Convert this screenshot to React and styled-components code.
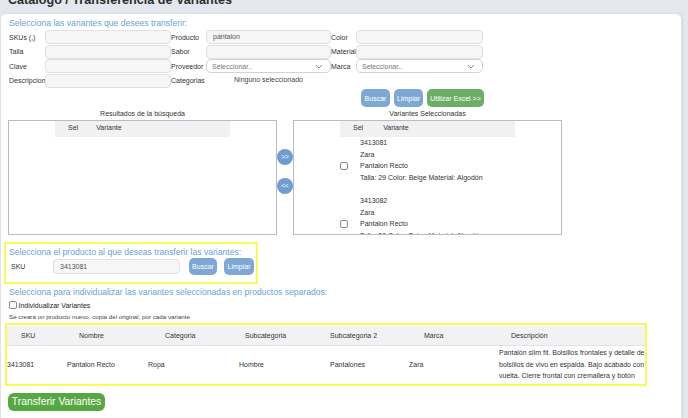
import React from 'react'
import styled, { createGlobalStyle } from 'styled-components'

const GlobalStyle = createGlobalStyle`
    html, body {
        margin: 0;
        padding: 0;
        overflow: hidden;
    }
    body {
        background: #e4e7ee;
        font-family: "Liberation Sans", Arial, sans-serif;
        color: #333;
    }
`

const Page = styled.div`
    padding: 0 6px 0 0;
    height: 418px;
    overflow: hidden;
`

const Title = styled.h1`
    margin: -7px 0 5px 8px;
    font-size: 12.6px;
    line-height: 15px;
    font-weight: bold;
    color: #2e2e2e;
    white-space: nowrap;
`

const Card = styled.div`
    background: #fff;
    border: 1px solid #e0e3e9;
    border-radius: 6px;
    box-shadow: 1px 0 2px rgba(0, 0, 0, 0.07);
    padding: 3.5px 0 20px 3px;
    height: 420px;
`

const Heading = styled.div`
    margin-left: ${p => p.$ml ?? 5}px;
    margin-top: ${p => p.$mt ?? 0}px;
    font-size: 8.6px;
    line-height: 11px;
    color: #6a9fd6;
    white-space: nowrap;
`

const FormGrid = styled.div`
    margin: 1.5px 0 0 5px;
    display: grid;
    grid-template-columns: 36px 126px 35px 125px 25px 127px;
    grid-auto-rows: 14.5px;
    align-items: center;
`

const Label = styled.span`
    font-size: 7px;
    color: #333;
    white-space: nowrap;
`

const TextInput = styled.div`
    box-sizing: border-box;
    height: ${p => p.$h ?? 14}px;
    width: ${p => (p.$w ? `${p.$w}px` : 'auto')};
    background: #f6f6f7;
    border: 1px solid #e0e0e3;
    border-radius: 4px;
    padding-left: 6px;
    font-size: 7px;
    line-height: ${p => (p.$h ?? 14) - 2}px;
    color: #555;
`

const SelectBox = styled.div`
    box-sizing: border-box;
    height: 14px;
    background: #fff;
    border: 1px solid #d3d3d6;
    border-radius: 5px;
    padding: 0 7px 0 5px;
    display: flex;
    align-items: center;
    justify-content: space-between;
    font-size: 7px;
    color: #777;
`

const Muted = styled.span`
    font-size: 7px;
    color: #444;
    text-align: center;
    margin-top: -3px;
`

const ButtonRow = styled.div`
    width: 480px;
    margin-top: 1px;
    display: flex;
    justify-content: flex-end;
    gap: 4px;
`

const Button = styled.button`
    box-sizing: border-box;
    width: ${p => p.$w}px;
    height: ${p => p.$h ?? 18}px;
    margin-left: ${p => p.$ml ?? 0}px;
    padding: 0;
    border: none;
    border-radius: 5px;
    background: ${p => (p.$green ? '#6dae67' : '#7ea8d4')};
    color: #fff;
    font-family: inherit;
    font-size: 7px;
    white-space: nowrap;
`

const PairGrid = styled.div`
    margin-left: 4px;
    display: grid;
    grid-template-columns: 269px 16px 269px;
`

const BoxTitle = styled.div`
    height: 13px;
    line-height: 13px;
    font-size: 7px;
    text-align: center;
    color: #333;
`

const ListBox = styled.div`
    box-sizing: border-box;
    height: 115px;
    border: 1px solid #bcbcbc;
    background: #fff;
    overflow: hidden;
    display: flex;
    justify-content: center;
`

const ListTable = styled.div`
    width: 175px;
`

const ListHeader = styled.div`
    height: 16.2px;
    background: #f1f1f3;
    display: flex;
    padding-top: 1px;
    font-size: 7px;
    line-height: 11px;
    box-sizing: border-box;
`

const HeadCell = styled.span`
    margin-left: ${p => p.$ml}px;
`

const ListItem = styled.div`
    display: grid;
    grid-template-columns: 20px 1fr;
    align-items: center;
    font-size: 7px;
    line-height: 11.6px;
    white-space: nowrap;
`

const ArrowCol = styled.div`
    display: flex;
    flex-direction: column;
    align-items: center;
    padding-top: 29px;
    gap: 13px;
`

const ArrowBtn = styled.div`
    width: 16px;
    height: 16px;
    border-radius: 50%;
    background: #6f9dcf;
    color: #fff;
    font-size: 6.5px;
    line-height: 16px;
    text-align: center;
`

const Check = styled.input.attrs({ type: 'checkbox', readOnly: true })`
    appearance: none;
    box-sizing: border-box;
    width: 8px;
    height: 8px;
    margin: 0;
    border: 1px solid #8a8a8a;
    border-radius: 2px;
    background: #fff;
`

const YellowBox = styled.div`
    box-sizing: border-box;
    width: ${p => p.$w}px;
    margin-top: ${p => p.$mt}px;
    margin-left: ${p => p.$ml ?? 0}px;
    border: 2px solid #f9f957;
    padding: ${p => p.$pad};
`

const SkuRow = styled.div`
    display: flex;
    align-items: center;
    height: 17px;
    margin-left: 2px;
`

const SkuLabel = styled(Label)`
    width: 42px;
`

const CheckRow = styled.div`
    display: flex;
    align-items: center;
    height: 9px;
    margin: 2.5px 0 0 5px;
    gap: 1.5px;
    font-size: 7px;
    color: #222;
`

const Note = styled.div`
    margin: 3.3px 0 0 5px;
    font-size: 6.2px;
    line-height: 8px;
    color: #444;
    white-space: nowrap;
`

const TableGrid = styled.div`
    display: grid;
    grid-template-columns: 60px 81px 91px 91px 79px 90px 146px;
    font-size: 7px;
    color: #333;
`

const Th = styled.div`
    height: 20px;
    line-height: 19px;
    padding-left: ${p => p.$pl}px;
    background: #f2f2f4;
    border-bottom: 1px solid #e3e3e7;
    box-sizing: border-box;
    white-space: nowrap;
`

const Td = styled.div`
    height: 38px;
    display: flex;
    align-items: center;
    line-height: 11.5px;
    white-space: pre-line;
`

const BigButton = styled.button`
    margin: 7px 0 0 4px;
    width: 97px;
    height: 18.5px;
    padding: 0;
    border: none;
    border-radius: 6px;
    background: #57a843;
    color: #fff;
    font-family: inherit;
    font-size: 10.3px;
    white-space: nowrap;
`

const Chevron = () => (
    <svg width="8" height="5" viewBox="0 0 8 5">
        <polyline points="1,1 4,4 7,1" fill="none" stroke="#888" strokeWidth="1" />
    </svg>
)

const selected = [
    { sku: '3413081', talla: '29' },
    { sku: '3413082', talla: '30' },
]

const columns = [
    { title: 'SKU', pl: 14, value: '3413081' },
    { title: 'Nombre', pl: 12, value: 'Pantalon Recto' },
    { title: 'Categoria', pl: 17, value: 'Ropa' },
    { title: 'Subcategoria', pl: 6, value: 'Hombre' },
    { title: 'Subcategoria 2', pl: 0, value: 'Pantalones' },
    { title: 'Marca', pl: 15, value: 'Zara' },
    {
        title: 'Descripción',
        pl: 12,
        value: 'Pantalón slim fit. Bolsillos frontales y detalle de\nbolsillos de vivo en espalda. Bajo acabado con\nvuelta. Cierre frontal con cremallera y botón',
    },
]

const App = () => {
    return (
        <Page>
            <GlobalStyle />
            <Title>Catalogo / Transferencia de Variantes</Title>
            <Card>
                <Heading>Selecciona las variantes que desees transferir:</Heading>
                <FormGrid>
                    <Label>SKUs (,)</Label>
                    <TextInput />
                    <Label>Producto</Label>
                    <TextInput>pantalon</TextInput>
                    <Label>Color</Label>
                    <TextInput />

                    <Label>Talla</Label>
                    <TextInput />
                    <Label>Sabor</Label>
                    <TextInput />
                    <Label>Material</Label>
                    <TextInput />

                    <Label>Clave</Label>
                    <TextInput />
                    <Label>Proveedor</Label>
                    <SelectBox>Seleccionar.. <Chevron /></SelectBox>
                    <Label>Marca</Label>
                    <SelectBox>Seleccionar.. <Chevron /></SelectBox>

                    <Label>Descripcion</Label>
                    <TextInput />
                    <Label>Categorias</Label>
                    <Muted>Ninguno seleccionado</Muted>
                </FormGrid>

                <ButtonRow>
                    <Button $w={29}>Buscar</Button>
                    <Button $w={29}>Limpiar</Button>
                    <Button $w={57} $green>Utilizar Excel &gt;&gt;</Button>
                </ButtonRow>

                <PairGrid>
                    <BoxTitle>Resultados de la búsqueda</BoxTitle>
                    <div />
                    <BoxTitle>Variantes Seleccionadas</BoxTitle>

                    <ListBox>
                        <ListTable>
                            <ListHeader>
                                <HeadCell $ml={13}>Sel</HeadCell>
                                <HeadCell $ml={18}>Variante</HeadCell>
                            </ListHeader>
                        </ListTable>
                    </ListBox>
                    <ArrowCol>
                        <ArrowBtn>&gt;&gt;</ArrowBtn>
                        <ArrowBtn>&lt;&lt;</ArrowBtn>
                    </ArrowCol>
                    <ListBox>
                        <ListTable>
                            <ListHeader>
                                <HeadCell $ml={13}>Sel</HeadCell>
                                <HeadCell $ml={20}>Variante</HeadCell>
                            </ListHeader>
                            {selected.map(v => (
                                <ListItem key={v.sku}>
                                    <Check />
                                    <div>
                                        <div>{v.sku}</div>
                                        <div>Zara</div>
                                        <div>Pantalon Recto</div>
                                        <div>Talla: {v.talla} Color: Beige Material: Algodón</div>
                                        <div>&nbsp;</div>
                                    </div>
                                </ListItem>
                            ))}
                        </ListTable>
                    </ListBox>
                </PairGrid>

                <YellowBox $w={254} $mt={7} $pad="2.8px 0 7px 3px">
                    <Heading $ml={0}>Selecciona el producto al que deseas transferir las variantes:</Heading>
                    <SkuRow>
                        <SkuLabel>SKU</SkuLabel>
                        <TextInput $w={127} $h={15.5}>3413081</TextInput>
                        <Button $w={28} $h={17} $ml={9}>Buscar</Button>
                        <Button $w={30} $h={17} $ml={7}>Limpiar</Button>
                    </SkuRow>
                </YellowBox>

                <Heading $mt={3.7}>Selecciona para individualizar las variantes seleccionadas en productos separados:</Heading>
                <CheckRow>
                    <Check />
                    <span>Individualizar Variantes</span>
                </CheckRow>
                <Note>Se creará un producto nuevo, copia del original, por cada variante</Note>

                <YellowBox $w={642} $mt={1.7} $ml={1} $pad="0.7px 0 0 0">
                    <TableGrid>
                        {columns.map(c => (
                            <Th key={c.title} $pl={c.pl}>{c.title}</Th>
                        ))}
                        {columns.map(c => (
                            <Td key={c.title}>{c.value}</Td>
                        ))}
                    </TableGrid>
                </YellowBox>

                <BigButton>Transferir Variantes</BigButton>
            </Card>
        </Page>
    )
}

export default App
